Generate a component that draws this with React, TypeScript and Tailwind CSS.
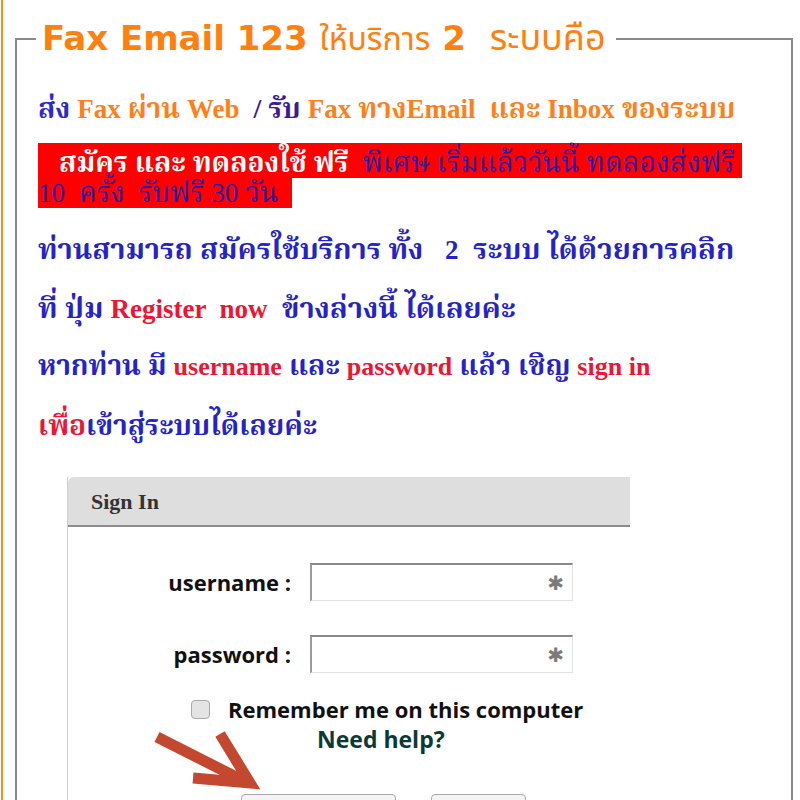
const serif = "font-['Liberation_Serif','Noto_Serif_Thai','Noto_Sans_Thai','Tahoma',serif]";
const sans = "font-['Open_Sans','Noto_Sans',sans-serif]";

// latin words run a little smaller than the thai around them
function L({ children, small }: { children: React.ReactNode; small?: boolean }) {
  return <span className={small ? "text-[26px] leading-none" : "text-[27px] leading-none"}>{children}</span>;
}

function Field({ label }: { label: string }) {
  return (
    <div className="flex items-center">
      <label className={`${sans} w-[223px] text-right text-[22px] font-bold text-[#111]`}>{label}</label>
      <div className="ml-[19px] flex h-[38px] w-[263px] items-center justify-end border-t-2 border-l-2 border-r border-b border-t-[#8a8a8a] border-l-[#9a9a9a] border-r-[#e2e2e2] border-b-[#e2e2e2] bg-white pr-[8px]">
        <span className="font-['DejaVu_Sans',sans-serif] text-[20px] leading-none text-[#7b7b7b]">✱</span>
      </div>
    </div>
  );
}

export default function App() {
  return (
    <div className="relative h-[800px] w-[800px] overflow-hidden bg-white">
      <div className="ml-[1px] min-h-[900px] border-l-2 border-[#ff8c1a] pl-[12px] pr-[7px] pt-[18px]">
        <fieldset className="min-h-[900px] border-2 border-[#8a8a8a] pl-[21px] pr-4">
          <legend className="ml-[-2px] px-[6px] pr-[10px] text-[34px] leading-[38px] text-[#ff7f0f]">
            <span className="font-['DejaVu_Sans',sans-serif] font-bold">Fax Email 123 </span>
            <span className="font-['Noto_Sans_Thai','Tahoma',sans-serif] text-[32px]">ให้บริการ</span>
            <span className="font-['DejaVu_Sans',sans-serif] font-bold"> 2 </span>
            <span className="ml-[12px] font-['Noto_Sans_Thai','Tahoma',sans-serif] text-[36px] leading-none">ระบบคือ</span>
          </legend>

          <p className={`${serif} mt-[35px] text-[28px] font-bold leading-[30px] whitespace-pre`}>
            <span className="text-[#2a2ad0]">ส่ง</span>
            <span className="text-[#ff7f1a]"> <L>Fax</L> ผ่าน <L>Web</L> </span>
            <span className="text-[#3b1a96]"> / รับ</span>
            <span className="text-[#ff7f1a]"> <L>Fax</L> ทาง<L>Email</L>  และ <L>Inbox</L> ของระบบ</span>
          </p>

          <p className={`${serif} mt-[24px] text-[28px] leading-[30px]`}>
            <span className="bg-[#ff0000] pt-[4px] whitespace-pre">
              <span className="font-bold text-white">{"   สมัคร และ ทดลองใช้ ฟรี "}</span>
              <span className="text-[#2a1aa8]">{" พิเศษ เริ่มแล้ววันนี้ ทดลองส่งฟรี "}</span>
              <br />
              <span className="text-[#2a1aa8]"><L>10</L>{"  ครั้ง  รับฟรี "}<L>30</L>{" วัน  "}</span>
            </span>
          </p>

          <p className={`${serif} mt-[26px] text-[29px] font-bold leading-[30px] text-[#2323c8] whitespace-pre`}>
            {"ท่านสามารถ สมัครใช้บริการ ทั้ง   "}<L>2</L>{"  ระบบ ได้ด้วยการคลิก"}
          </p>

          <p className={`${serif} mt-[29px] text-[29px] font-bold leading-[30px] text-[#2323c8] whitespace-pre`}>
            {"ที่ ปุ่ม "}
            <span className="text-[#ee1433]"><L>{"Register  now"}</L></span>
            {"  ข้างล่างนี้ ได้เลยค่ะ"}
          </p>

          <p className={`${serif} mt-[28px] text-[28px] font-bold leading-[30px] text-[#2323c8] whitespace-pre`}>
            {"หากท่าน มี "}
            <span className="text-[#ee1433]"><L small>username</L></span>
            {" และ "}
            <span className="text-[#ee1433]"><L small>password</L></span>
            {" แล้ว เชิญ "}
            <span className="text-[#ee1433]"><L small>sign in</L></span>
          </p>

          <p className={`${serif} mt-[30px] text-[28px] font-bold leading-[30px] text-[#2323c8]`}>
            <span className="text-[#ee1433]">เพื่อ</span>
            เข้าสู่ระบบได้เลยค่ะ
          </p>

          <div className="mt-[36px] ml-[29px] w-[563px] border-l border-[#cfcfcf]">
            <div className={`${serif} flex h-[50px] items-center rounded-tl-[6px] border-b-2 border-[#8c8c8c] bg-[#dedede] pl-[23px] text-[22px] font-bold text-[#333]`}>
              Sign In
            </div>
            <div className="pt-[36px]">
              <Field label="username :" />
              <div className="mt-[34px]">
                <Field label="password :" />
              </div>
              <div className="mt-[24px] flex items-center pl-[123px]">
                <span className="h-[19px] w-[19px] rounded-[4px] border border-[#a8a8a8] bg-[#e4e4e4]" />
                <span className={`${sans} ml-[18px] text-[22px] font-bold leading-[24px] text-[#111]`}>
                  Remember me on this computer
                </span>
              </div>
              <div className={`${sans} mt-[6px] pl-[249px] text-[23px] font-bold leading-[24px] text-[#0a3a38]`}>
                Need help?
              </div>
              <div className="mt-[43px] flex">
                <div className="ml-[173px] h-[36px] w-[155px] rounded-[4px] border border-[#a9a9a9] bg-[#f4f4f4]" />
                <div className="ml-[35px] h-[36px] w-[95px] rounded-[4px] border border-[#a9a9a9] bg-[#f4f4f4]" />
              </div>
            </div>
          </div>
        </fieldset>
      </div>

      <svg className="absolute left-[140px] top-[720px]" width="130" height="80" viewBox="0 0 130 80">
        <path d="M17 17 L104 61" stroke="#c4482f" strokeWidth="11" fill="none" />
        <path d="M80 14 L110 63 L53 58" stroke="#c4482f" strokeWidth="11" fill="none" strokeLinejoin="miter" />
      </svg>
    </div>
  );
}
